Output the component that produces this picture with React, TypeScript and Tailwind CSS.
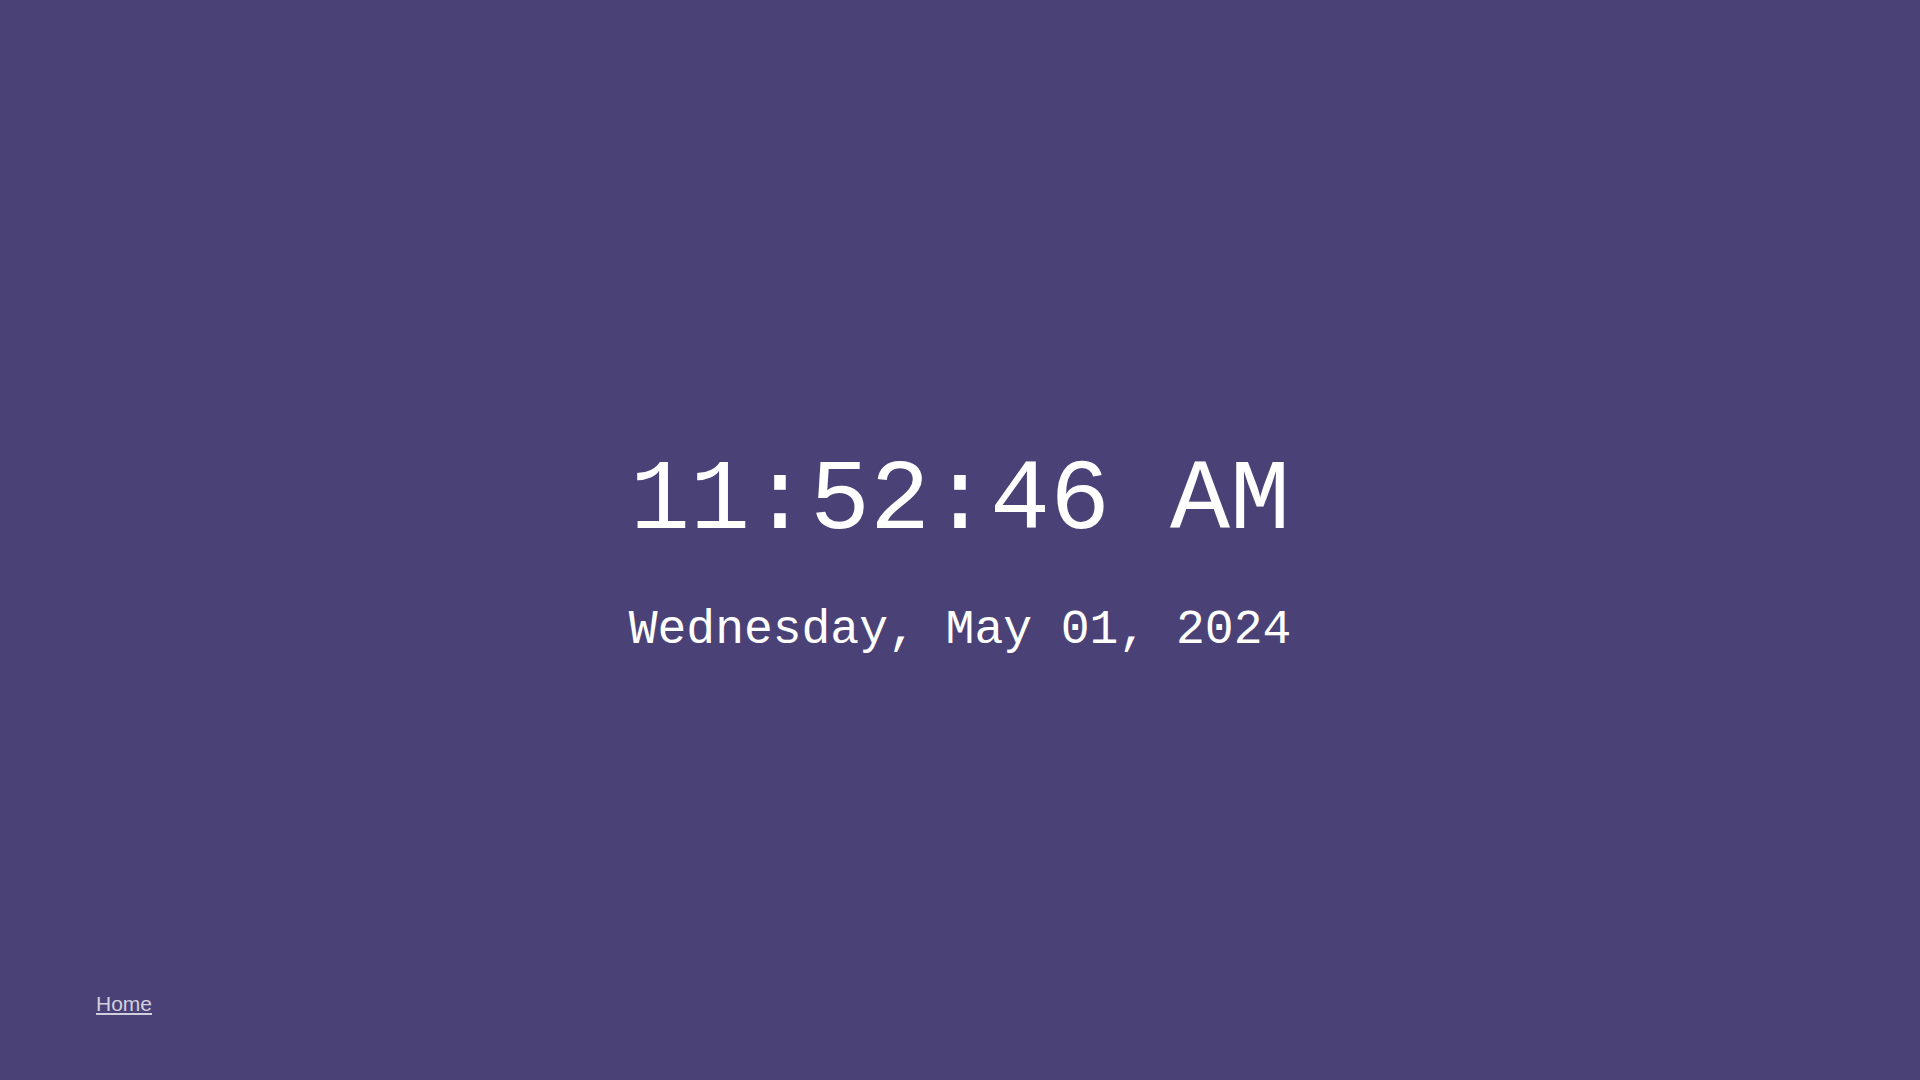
export default function App() {
  const time = "11:52:46 AM";
  const date = "Wednesday, May 01, 2024";

  return (
    <div className="h-screen w-full flex flex-col bg-[#4a4277] text-white">
      <main className="flex-1 flex flex-col items-center justify-center pt-[112px] font-['Liberation_Mono',monospace]">
        <div className="text-[100px] leading-none whitespace-pre">{time}</div>
        <div className="mt-[54px] text-[48px] leading-none whitespace-pre">{date}</div>
      </main>
      <footer className="px-24 pb-[63px]">
        <a
          href="#"
          className="text-[21px] leading-none text-[#d2d0de] underline font-['Liberation_Sans',Arial,sans-serif]"
        >
          Home
        </a>
      </footer>
    </div>
  );
}
